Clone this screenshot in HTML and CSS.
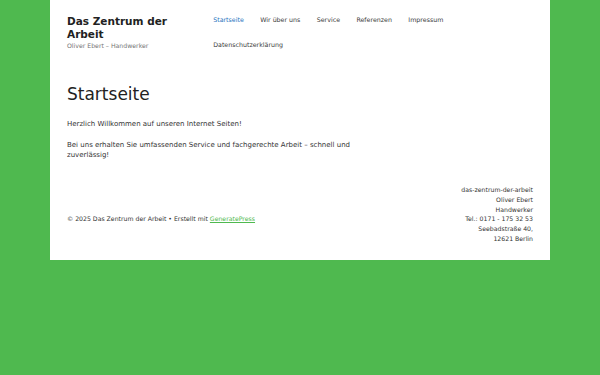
FILE: index.html
```html
<!DOCTYPE html>
<html lang="de">
<head>
    <meta charset="UTF-8">
    <meta name="viewport" content="width=device-width, initial-scale=1.0">
    <title>Startseite – Das Zentrum der Arbeit</title>
    <link rel="stylesheet" href="styles.css">
</head>
<body>
    <div class="page">
        <header class="site-header">
            <div class="branding">
                <p class="site-title">Das Zentrum der Arbeit</p>
                <p class="site-desc">Oliver Ebert – Handwerker</p>
            </div>
            <nav class="main-nav">
                <ul>
                    <li><a href="#" class="current">Startseite</a></li>
                    <li><a href="#">Wir über uns</a></li>
                    <li><a href="#">Service</a></li>
                    <li><a href="#">Referenzen</a></li>
                    <li><a href="#">Impressum</a></li>
                    <li><a href="#">Datenschutzerklärung</a></li>
                </ul>
            </nav>
        </header>

        <main class="content">
            <h1>Startseite</h1>
            <p>Herzlich Willkommen auf unseren Internet Seiten!</p>
            <p>Bei uns erhalten Sie umfassenden Service und fachgerechte Arbeit – schnell und zuverlässig!</p>
        </main>

        <footer class="site-footer">
            <div class="copyright">© 2025 Das Zentrum der Arbeit • Erstellt mit <a href="#">GeneratePress</a></div>
            <div class="footer-widget">
                das-zentrum-der-arbeit<br>
                Oliver Ebert<br>
                Handwerker<br>
                Tel.: 0171 - 175 32 53<br>
                Seebadstraße 40,<br>
                12621 Berlin
            </div>
        </footer>
    </div>
</body>
</html>
```

FILE: styles.css
```css
body { margin: 0; background: #4fb94f; font-family: "DejaVu Sans", sans-serif; color: #333; }
.page { width: 500px; margin: 0 auto; background: #fff; }

.site-header { display: flex; justify-content: space-between; padding: 0 17px; }
.branding { padding-top: 15px; width: 138px; }
.site-title { margin: 0; font-size: 10.5px; font-weight: bold; line-height: 13px; color: #222; }
.site-desc { margin: 0; font-size: 6.2px; line-height: 9px; color: #757575; }

.main-nav { width: 328px; padding-top: 8px; }
.main-nav ul { display: flex; flex-wrap: wrap; list-style: none; margin: 0; padding: 0; }
.main-nav a { display: block; padding: 0 8.2px; font-size: 6.3px; line-height: 24.6px; color: #3a3a3a; text-decoration: none; }
.main-nav a.current { color: #1e73be; }

.content { padding: 27px 17px 0; width: 310px; }
.content h1 { margin: 0 0 14px; font-size: 17px; font-weight: normal; line-height: 20.4px; color: #222; }
.content p { margin: 0 0 10.5px; font-size: 7px; line-height: 10.5px; }

.site-footer { display: flex; justify-content: space-between; align-items: flex-start; padding: 14px 17px 17px; font-size: 6.2px; line-height: 9.7px; }
.copyright { margin-top: 29px; }
.copyright a { color: #4fb94f; }
.footer-widget { text-align: right; }
```
